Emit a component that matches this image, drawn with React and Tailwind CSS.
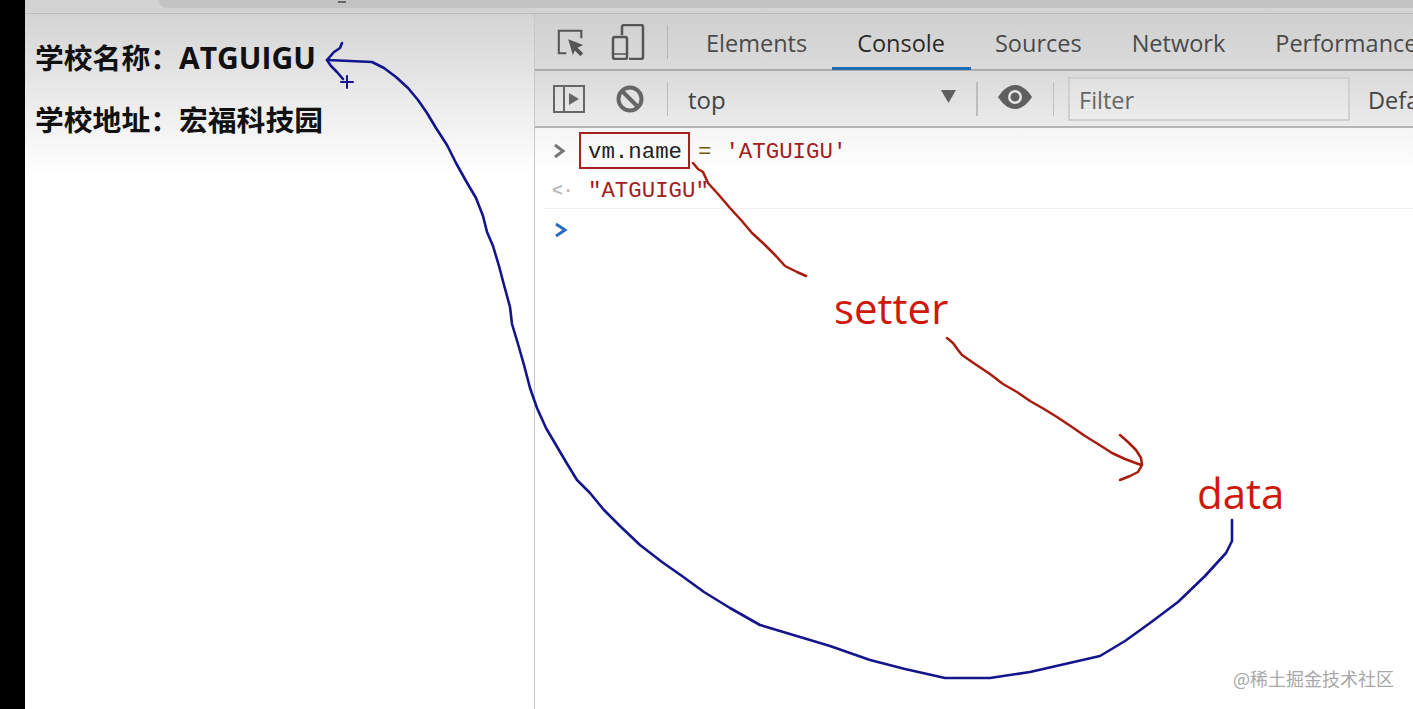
import React from "react";

const sans = "font-['Open_Sans','Noto_Sans',sans-serif]";
const cjk = "font-['Open_Sans','Noto_Sans_CJK_SC',sans-serif]";
const mono = "font-['Liberation_Mono','DejaVu_Sans_Mono',monospace]";

function Tab({ children, active, className = "" }) {
  return (
    <div className={`relative h-full flex items-center shrink-0 pt-[4px] text-[23.5px] ${active ? "text-[#2a2a2a]" : "text-[#4a4a4a]"} ${className}`}>
      {children}
      {active && <div className="absolute left-[-25px] right-[-26px] bottom-[-1px] h-[3px] bg-[#1f6bb5]" />}
    </div>
  );
}

function Annotations() {
  return (
    <svg className="absolute inset-0 pointer-events-none" width="1413" height="709" viewBox="0 0 1413 709" fill="none" strokeLinejoin="round" strokeLinecap="round">
      <g stroke="#14148c" strokeWidth="2.6">
        <path d="M342 43 L340 48 L334 52 L327 60 L331 66 L337 72 L343 79" />
        <path d="M327 60 L350 61 L372 62 L384 68 L396 77 L408 88 L418 100 L427 113 L436 128 L447 145 L456 163 L466 181 L476 198 L483 216 L487 232 L493 246 L499 266 L504 285 L510 307 L512 324 L518 344 L524 365 L530 388 L537 408 L546 428 L556 445 L566 462 L577 480 L590 493 L604 510 L620 526 L640 545 L662 562 L682 576 L704 592 L730 608 L760 625 L790 634 L830 646 L870 660 L905 669 L945 678 L990 678 L1030 672 L1065 664 L1100 656 L1125 641 L1150 623 L1178 602 L1205 576 L1226 553 L1232 541 L1232 520" />
      </g>
      <path d="M347 76 L347 88 M341 82 L353 82" stroke="#14148c" strokeWidth="2" />
      <g stroke="#a81c10" strokeWidth="2.5">
        <path d="M693 163 L698 169 L703 172 L708 183 L718 194 L730 208 L741 220 L752 233 L764 244 L776 256 L785 266 L797 272 L806 276" />
        <path d="M947 338 L953 343 L958 350 L962 355 L975 364 L990 374 L1003 384 L1017 392 L1030 401 L1044 409 L1057 417 L1072 427 L1085 436 L1098 444 L1112 453 L1125 459 L1141 465" />
        <path d="M1120 435 L1128 442 L1136 450 L1141 458 L1142 465 L1138 472 L1130 476 L1120 480" />
      </g>
    </svg>
  );
}

export default function App() {
  return (
    <div className={`relative w-[1413px] h-[709px] overflow-hidden flex bg-white ${sans}`}>
      <div className="w-[25px] shrink-0 bg-black" />
      <div className="flex-1 min-w-0 flex flex-col">
        <div className="h-[14px] shrink-0 flex bg-[#d3d3d3] border-b border-[#bcbcbc]">
          <div className="ml-[134px] flex-1 h-[8px] bg-[#c3c3c3] rounded-bl-[8px] relative">
            <div className="absolute left-[179px] top-[1px] w-[8px] h-[2px] bg-[#666]" />
          </div>
        </div>
        <div className="flex-1 min-h-0 flex">
          <div className={`w-[509px] shrink-0 pl-[10px] pt-[23px] flex flex-col gap-[21px] bg-linear-to-b from-[#d4d4d4] to-white to-[160px] text-[28.8px] leading-[41px] font-bold text-[#111] ${cjk}`}>
            <div className="whitespace-nowrap">学校名称：<span className="text-[30px]">ATGUIGU</span></div>
            <div className="whitespace-nowrap">学校地址：宏福科技园</div>
          </div>
          <div className="flex-1 min-w-0 flex flex-col border-l border-[#c8c8c8]">
            <div className="h-[57px] shrink-0 flex items-center bg-linear-to-b from-[#cfcfcf] to-[#dbdbdb] border-b-2 border-[#adadad]">
              <svg className="ml-[21px] mt-[3px] shrink-0" width="30" height="30" viewBox="0 0 32 32" fill="none">
                <path d="M11 27H3V3h24v8" stroke="#555" strokeWidth="2.2" />
                <path d="M13 12 L29 18 L23 21 L29 27 L26 30 L20 24 L18 29 Z" fill="#555" />
              </svg>
              <svg className="ml-[25px] mt-[1px] shrink-0" width="34" height="36" viewBox="0 0 34 36" fill="none" stroke="#555" strokeWidth="2.5">
                <path d="M11 11V3a2 2 0 0 1 2-2h17a2 2 0 0 1 2 2v30a2 2 0 0 1-2 2H18" />
                <rect x="2" y="13" width="14" height="22" rx="2" />
                <path d="M2 30h14" strokeWidth="1.5" />
              </svg>
              <div className="ml-[22px] w-[1px] h-[34px] bg-[#b5b5b5] shrink-0" />
              <Tab className="ml-[38px]">Elements</Tab>
              <Tab active className="ml-[50px]">Console</Tab>
              <Tab className="ml-[50px]">Sources</Tab>
              <Tab className="ml-[50px]">Network</Tab>
              <Tab className="ml-[50px]">Performance</Tab>
            </div>
            <div className="h-[57px] shrink-0 flex items-center bg-linear-to-b from-[#dadada] to-[#ebebeb] border-b-2 border-[#b5b5b5]">
              <svg className="ml-[18px] shrink-0" width="32" height="28" viewBox="0 0 32 28" fill="none">
                <rect x="1" y="1" width="30" height="26" stroke="#666" strokeWidth="2" />
                <path d="M11 1v26" stroke="#666" strokeWidth="2" />
                <path d="M16 8 L26 14 L16 20 Z" fill="#666" />
              </svg>
              <svg className="ml-[31px] shrink-0" width="28" height="28" viewBox="0 0 28 28" fill="none" stroke="#666" strokeWidth="4">
                <circle cx="14" cy="14" r="11.5" />
                <path d="M6 6 L22 22" />
              </svg>
              <div className="ml-[23px] w-[1px] h-[34px] bg-[#bdbdbd] shrink-0" />
              <div className="ml-[20px] w-[252px] shrink-0 pt-[2px] text-[24px] text-[#444] flex items-center">top</div>
              <svg className="ml-[1px] shrink-0 mb-[4px]" width="15" height="13" viewBox="0 0 15 13"><path d="M0 0 H15 L7.5 13 Z" fill="#5f5f5f" /></svg>
              <div className="ml-[20px] w-[2px] h-[34px] bg-[#bdbdbd] shrink-0" />
              <svg className="ml-[20px] mb-[4px] shrink-0" width="34" height="24" viewBox="0 0 34 24">
                <path d="M0 12 C6 3 12 0 17 0 C22 0 28 3 34 12 C28 21 22 24 17 24 C12 24 6 21 0 12 Z" fill="#5f5f5f" />
                <circle cx="17" cy="12" r="7" fill="#e4e4e4" />
                <circle cx="17" cy="12" r="4.5" fill="#5f5f5f" />
              </svg>
              <div className="ml-[21px] w-[1px] h-[34px] bg-[#c0c0c0] shrink-0" />
              <div className="ml-[14px] w-[282px] h-[44px] shrink-0 flex items-center pl-[9px] pt-[5px] text-[23.5px] text-[#666] border-2 border-[#d0d0d0] bg-linear-to-b from-[#e0e0e0] to-[#ececec]">Filter</div>
              <div className="ml-[18px] pt-[4px] text-[23.5px] text-[#444] whitespace-nowrap">Default</div>
            </div>
            <div className={`flex-1 min-h-0 relative bg-linear-to-b from-[#f5f5f5] to-white to-[45px] text-[22.4px] ${mono}`}>
              <div className="h-[81px] pt-[4px] border-b border-[#eeeeee] ml-[9px] relative">
                <div className="flex items-center h-[37px] ml-[9px]">
                  <svg className="shrink-0" width="13" height="16" viewBox="0 0 13 16" fill="none"><path d="M2 2 L10 8 L2 14" stroke="#777" strokeWidth="3" /></svg>
                  <div className="ml-[13px] h-[37px] w-[111px] shrink-0 border-2 border-[#a82020] flex items-center pl-[7px] pt-[4px] text-[#222]">vm.name</div>
                  <span className="ml-[8px] pt-[4px] text-[#6f5a10] whitespace-pre">=</span>
                  <span className="ml-[14px] pt-[4px] text-[#a02020] whitespace-pre">'ATGUIGU'</span>
                </div>
                <div className="flex items-center h-[37px] mt-[4px] ml-[8px]">
                  <span className="w-[36px] shrink-0 text-[#bbb] text-[18px] font-bold">&lt;·</span>
                  <span className="text-[#a02020] whitespace-pre">"ATGUIGU"</span>
                </div>
              </div>
              <svg className="ml-[19px] mt-[13px]" width="14" height="16" viewBox="0 0 14 16" fill="none"><path d="M2 2 L11 8 L2 14" stroke="#2a6cc0" strokeWidth="3" /></svg>
            </div>
          </div>
        </div>
      </div>
      <Annotations />
      <div className="absolute left-[834px] top-[281px] text-[42px] leading-[54px] font-medium text-[#d0180a]">setter</div>
      <div className="absolute left-[1197px] top-[466px] text-[42px] leading-[54px] font-medium text-[#d0180a]">data</div>
      <div className="absolute left-[1233px] top-[666px] text-[18px] leading-[24px] text-[#a8a8a8] font-['Noto_Sans_CJK_SC',sans-serif] whitespace-nowrap">@稀土掘金技术社区</div>
    </div>
  );
}
